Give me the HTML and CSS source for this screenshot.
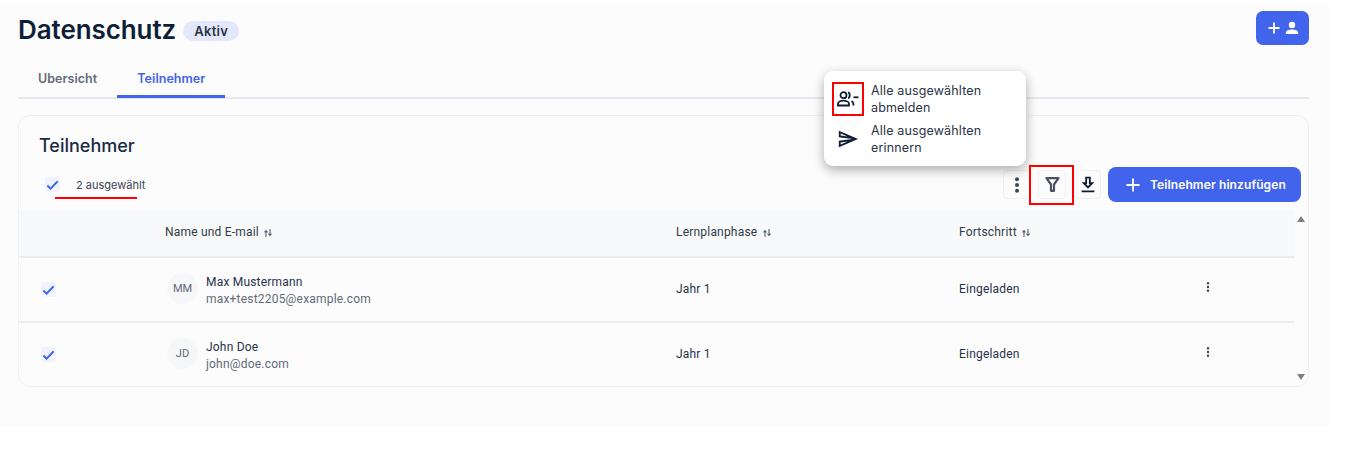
FILE: index.html
```html
<!DOCTYPE html>
<html lang="de">
<head>
<meta charset="utf-8">
<title>Datenschutz</title>
<link rel="stylesheet" href="styles.css">
</head>
<body>
<main class="page">
  <header class="head">
    <div class="head-title">
      <h1>Datenschutz</h1>
      <span class="badge">Aktiv</span>
    </div>
    <button class="add-user" type="button" aria-label="Hinzufügen">
      <svg width="14" height="14" viewBox="0 0 14 14"><path d="M7 1.5v11M1.500 7h11" stroke="#fff" stroke-width="1.800" fill="none"/></svg>
      <svg width="14" height="14" viewBox="0 0 14 14"><circle cx="7" cy="3.900" r="3.200" fill="#fff"/><path d="M.8 13v-1.200C.8 9.600 4 8.400 7 8.400s6.200 1.200 6.200 3.400V13z" fill="#fff"/></svg>
    </button>
  </header>

  <nav class="tabs">
    <a class="tab">Ubersicht</a>
    <a class="tab active">Teilnehmer</a>
  </nav>

  <section class="card">
    <h2>Teilnehmer</h2>
    <div class="toolbar">
      <div class="selection">
        <span class="check"><svg width="16" height="16" viewBox="0 0 16 16"><path d="M2.500 8.500l3.500 3.500 7.500-8" stroke="#4262f0" stroke-width="2" fill="none"/></svg></span>
        <span class="sel-text">2 ausgewählt</span>
      </div>
      <div class="actions">
        <button class="icon-btn kebab" type="button" aria-label="Mehr"><svg width="6" height="16" viewBox="0 0 6 16"><circle cx="3" cy="2.200" r="2"/><circle cx="3" cy="8" r="2"/><circle cx="3" cy="13.800" r="2"/></svg></button>
        <button class="icon-btn filter" type="button" aria-label="Filter"><svg width="15" height="15" viewBox="0 0 15 15"><path d="M1.500 1.200h12L9 7.500v6.300H6V7.500z" fill="none" stroke="#4a5260" stroke-width="2.200" stroke-linejoin="round"/></svg></button>
        <button class="icon-btn download" type="button" aria-label="Download"><svg width="22" height="22" viewBox="0 0 24 24"><path d="M15 9V3H9v6H5l7 7 7-7h-4zm-4-4h2v6h1.170L12 13.170 9.830 11H11V5zM5 18h14v2H5z" fill="#111d33"/></svg></button>
        <button class="primary" type="button">
          <svg width="14" height="14" viewBox="0 0 14 14"><path d="M7 .5v13M.5 7h13" stroke="#fff" stroke-width="1.800" fill="none"/></svg>
          Teilnehmer hinzufügen
        </button>
      </div>
    </div>

    <div class="table">
      <div class="row thead">
        <span></span>
        <span class="th">Name und E-mail <svg class="sort" width="8" height="8" viewBox="0 0 8 8"><path d="M2 8V2M.5 3.300L2 1.500l1.500 1.800M6 0v6M4.500 4.700L6 6.500l1.500-1.800" stroke="#5a6270" stroke-width="1.100" fill="none"/></svg></span>
        <span class="th">Lernplanphase <svg class="sort" width="8" height="8" viewBox="0 0 8 8"><path d="M2 8V2M.5 3.300L2 1.500l1.500 1.800M6 0v6M4.500 4.700L6 6.500l1.500-1.800" stroke="#5a6270" stroke-width="1.100" fill="none"/></svg></span>
        <span class="th">Fortschritt <svg class="sort" width="8" height="8" viewBox="0 0 8 8"><path d="M2 8V2M.5 3.300L2 1.500l1.500 1.800M6 0v6M4.500 4.700L6 6.500l1.500-1.800" stroke="#5a6270" stroke-width="1.100" fill="none"/></svg></span>
        <span></span>
      </div>
      <div class="row">
        <span class="check row-check"><svg width="16" height="16" viewBox="0 0 16 16"><path d="M2.500 8.500l3.500 3.500 7.500-8" stroke="#4262f0" stroke-width="2" fill="none"/></svg></span>
        <div class="person">
          <span class="avatar">MM</span>
          <div class="who"><div class="name">Max Mustermann</div><div class="mail">max+test2205@example.com</div></div>
        </div>
        <span class="cell">Jahr 1</span>
        <span class="cell">Eingeladen</span>
        <svg class="row-menu" width="4" height="10" viewBox="0 0 4 10"><circle cx="2" cy="1.200" r="1.200"/><circle cx="2" cy="5" r="1.200"/><circle cx="2" cy="8.800" r="1.200"/></svg>
      </div>
      <div class="row">
        <span class="check row-check"><svg width="16" height="16" viewBox="0 0 16 16"><path d="M2.500 8.500l3.500 3.500 7.500-8" stroke="#4262f0" stroke-width="2" fill="none"/></svg></span>
        <div class="person">
          <span class="avatar">JD</span>
          <div class="who"><div class="name">John Doe</div><div class="mail">john@doe.com</div></div>
        </div>
        <span class="cell">Jahr 1</span>
        <span class="cell">Eingeladen</span>
        <svg class="row-menu" width="4" height="10" viewBox="0 0 4 10"><circle cx="2" cy="1.200" r="1.200"/><circle cx="2" cy="5" r="1.200"/><circle cx="2" cy="8.800" r="1.200"/></svg>
      </div>
    </div>
    <span class="arrow up"></span>
    <span class="arrow down"></span>
  </section>

  <div class="menu">
    <div class="menu-item">
      <svg class="menu-icon" width="22" height="16" viewBox="0 0 22 16" fill="none" stroke="#111d33" stroke-width="1.800"><circle cx="6.500" cy="4.200" r="3"/><path d="M1 14.500v-1.700C1 11 3.700 9.700 6.500 9.700s5.500 1.300 5.500 3.100v1.700z"/><path d="M11 1.300c2.300.5 2.300 5.300 0 5.800M14.500 10c1.400.6 2 1.700 2 4.500"/><path d="M16.500 6.300h5"/></svg>
      <span>Alle ausgewählten abmelden</span>
    </div>
    <div class="menu-item">
      <svg class="menu-icon" width="22" height="22" viewBox="0 0 24 24"><path d="M4.010 6.030l7.510 3.220-7.520-1 .01-2.220m7.500 8.720L4 17.970v-2.220l7.510-1M2.010 3L2 10l15 2-15 2 .01 7L23 12 2.010 3z" fill="#111d33"/></svg>
      <span>Alle ausgewählten erinnern</span>
    </div>
  </div>

  <span class="mark mark-user"></span>
  <span class="mark mark-filter"></span>
  <span class="mark-line"></span>
</main>
</body>
</html>
```
FILE: styles.css
```css
* { box-sizing: border-box; }
html, body { margin: 0; background: #fff; }
body { font-family: Inter, "Liberation Sans", sans-serif; color: #111d33; height: 449px; overflow: hidden; }
button { font-family: inherit; cursor: pointer; }

.page { position: relative; width: 1329px; height: 424px; margin-top: 3px; background: #fcfcfd; padding: 8px 20px 0 18px; }

.head { display: flex; justify-content: space-between; align-items: flex-start; height: 46px; }
.head-title { display: flex; align-items: center; gap: 7px; height: 37px; }
h1 { margin: 0; font-size: 26px; font-weight: 600; line-height: 37px; color: #0f1f38; letter-spacing: -.08px; }
.badge { background: #e3e7fb; border-radius: 10px; height: 20px; margin-top: 3px; padding: 0 11px; font-size: 13px; font-weight: 600; line-height: 20px; color: #2c3442; letter-spacing: .3px; }
.add-user { width: 53px; height: 34px; border: 0; border-radius: 7px; background: #4263eb; display: flex; align-items: center; justify-content: center; gap: 4px; padding: 0; }

.tabs { display: flex; height: 39px; margin-top: 3px; border-bottom: 2px solid #e6e8ef; }
.tab { padding: 0 20px; height: 38px; font-size: 12.500px; font-weight: 600; line-height: 38px; color: #636b7a; letter-spacing: .05px; }
.tab.active { color: #4263eb; border-bottom: 3px solid #4263eb; }

.card { position: relative; margin-top: 16px; height: 272px; border: 1px solid #eff0f3; border-radius: 12px; padding-top: 18px; }
h2 { margin: 0 0 0 20px; font-size: 18px; font-weight: 500; line-height: 24px; color: #1b2a44; }

.toolbar { display: flex; justify-content: space-between; align-items: center; height: 35px; margin-top: 9px; padding-right: 7px; }
.selection { display: flex; align-items: center; gap: 16px; padding-left: 26px; }
.check { display: inline-flex; align-items: center; justify-content: center; width: 15px; height: 15px; border-radius: 3px; background: #f0f3fe; }
.sel-text { font-size: 11px; color: #3a4252; }
.actions { display: flex; align-items: center; }
.icon-btn { display: flex; align-items: center; justify-content: center; height: 29px; border: 1px solid #f0f1f4; background: #fcfcfd; border-radius: 4px; padding: 0; }
.kebab { width: 27px; }
.kebab svg { fill: #3d4657; }
.filter { width: 28px; margin-left: 8px; }
.download { width: 27px; margin-left: 8px; }
.primary { display: flex; align-items: center; gap: 10px; margin-left: 7px; width: 193px; height: 35px; border: 0; border-radius: 8px; background: #4263eb; color: #fff; font-size: 12px; font-weight: 600; letter-spacing: .1px; padding: 0 0 0 18px; white-space: nowrap; }

.table { width: 1276px; margin-top: 8px; }
.row { display: grid; grid-template-columns: 146px 511px 283px 247px 1fr; align-items: center; height: 65px; padding-bottom: 2px; border-bottom: 2px solid #ecedf1; }
.row:last-child { border-bottom: 0; height: 63px; }
.thead { height: 48px; background: #f8f9fb; }
.th { font-family: Roboto, sans-serif; font-size: 12px; color: #333a47; letter-spacing: .2px; }
.sort { margin-left: 2px; vertical-align: -1px; }
.row-check { margin-left: 22px; margin-top: 2px; }
.person { display: flex; align-items: center; gap: 8px; margin-left: 2px; }
.who { margin-top: 5px; }
.avatar { display: flex; align-items: center; justify-content: center; width: 31px; height: 31px; border-radius: 50%; background: #f6f7f9; font-family: Roboto, sans-serif; font-size: 11px; color: #5e6675; }
.name { font-family: Roboto, sans-serif; font-size: 12px; line-height: 17px; color: #27324a; letter-spacing: .2px; }
.mail { font-family: Roboto, sans-serif; font-size: 12px; line-height: 17px; color: #626b7a; letter-spacing: .2px; }
.cell { font-family: Roboto, sans-serif; font-size: 12px; color: #27324a; letter-spacing: .2px; }
.row-menu { fill: #3d4657; margin-top: -4px; }

.arrow { position: absolute; right: 3px; width: 0; height: 0; border-left: 4px solid transparent; border-right: 4px solid transparent; }
.arrow.up { top: 100px; border-bottom: 6px solid #808080; }
.arrow.down { top: 258px; border-top: 6px solid #808080; }

.menu { position: absolute; left: 824px; top: 68px; width: 202px; height: 95px; background: #fff; border-radius: 9px; box-shadow: 0 4px 12px rgba(0,0,0,.32); padding-top: 11px; }
.menu-item { display: flex; align-items: center; gap: 12px; height: 34px; margin-bottom: 6px; padding-left: 13px; font-size: 12.500px; line-height: 17px; color: #2a3344; letter-spacing: .15px; }
.menu-icon { flex: none; }
.menu-item span { width: 125px; }

.mark { position: absolute; border: 2px solid #f00; }
.mark-user { left: 832px; top: 79px; width: 32px; height: 34px; }
.mark-filter { left: 1029px; top: 162px; width: 45px; height: 40px; }
.mark-line { position: absolute; left: 55px; top: 194px; width: 82px; height: 2px; background: #f00; }
```
